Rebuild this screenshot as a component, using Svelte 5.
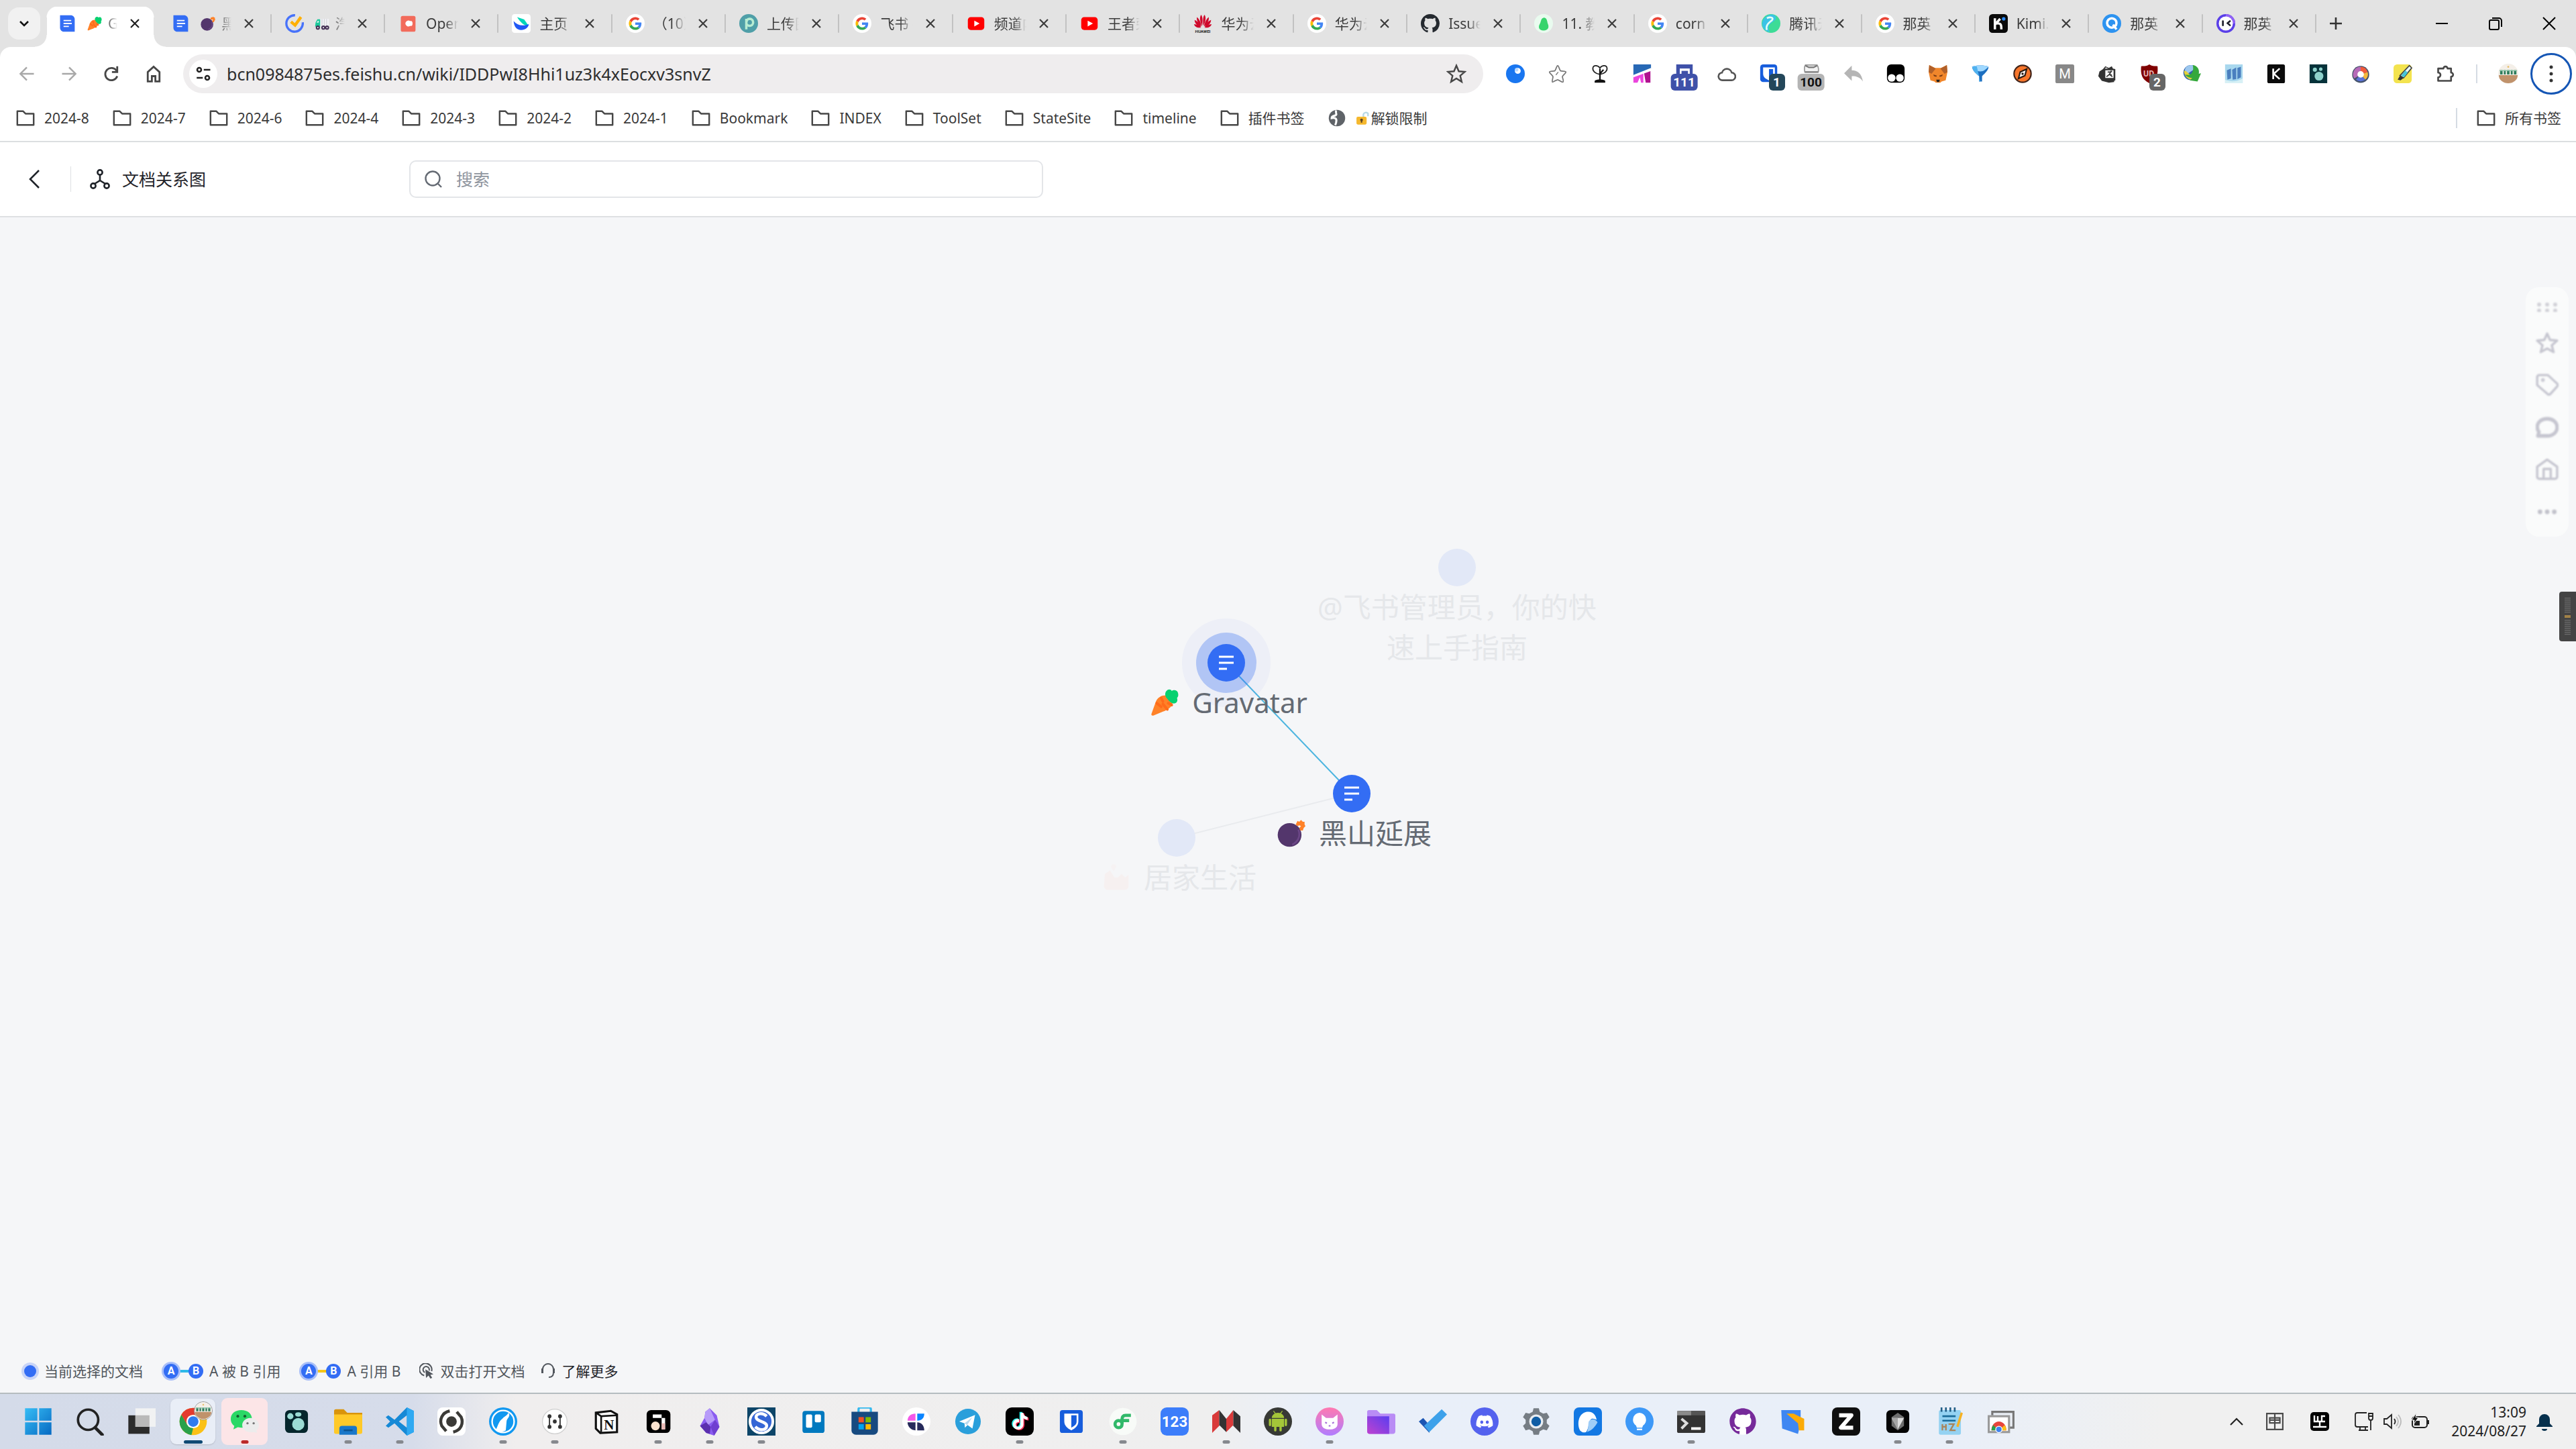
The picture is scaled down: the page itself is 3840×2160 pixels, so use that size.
<script>
  const googleG =
    '<circle cx="16" cy="16" r="16" fill="#fff"/><g transform="translate(5 5) scale(.458)"><path fill="#ea4335" d="M24 9.5c3.54 0 6.71 1.22 9.21 3.6l6.85-6.85C35.9 2.38 30.47 0 24 0 14.62 0 6.51 5.38 2.56 13.22l7.98 6.19C12.43 13.72 17.74 9.5 24 9.5z"/><path fill="#4285f4" d="M46.98 24.55c0-1.57-.15-3.09-.38-4.55H24v9.02h12.94c-.58 2.96-2.26 5.48-4.78 7.18l7.73 6c4.51-4.18 7.09-10.36 7.09-17.65z"/><path fill="#fbbc05" d="M10.53 28.59c-.48-1.45-.76-2.99-.76-4.59s.27-3.14.76-4.59l-7.98-6.19C.92 16.46 0 20.12 0 24c0 3.88.92 7.54 2.56 10.78l7.97-6.19z"/><path fill="#34a853" d="M24 48c6.48 0 11.93-2.13 15.89-5.81l-7.73-6c-2.15 1.45-4.92 2.3-8.16 2.3-6.26 0-11.57-4.22-13.47-9.91l-7.98 6.19C6.51 42.62 14.62 48 24 48z"/></g>';

  const octocat =
    'M8 0C3.58 0 0 3.58 0 8c0 3.54 2.29 6.53 5.47 7.59.4.07.55-.17.55-.38 0-.19-.01-.82-.01-1.49-2.01.37-2.53-.49-2.69-.94-.09-.23-.48-.94-.82-1.13-.28-.15-.68-.52-.01-.53.63-.01 1.08.58 1.23.82.72 1.21 1.87.87 2.33.66.07-.52.28-.87.51-1.07-1.78-.2-3.64-.89-3.64-3.95 0-.87.31-1.59.82-2.15-.08-.2-.36-1.02.08-2.12 0 0 .67-.21 2.2.82.64-.18 1.32-.27 2-.27.68 0 1.36.09 2 .27 1.53-1.04 2.2-.82 2.2-.82.44 1.1.16 1.92.08 2.12.51.56.82 1.27.82 2.15 0 3.07-1.87 3.75-3.65 3.95.29.25.54.73.54 1.48 0 1.07-.01 1.93-.01 2.2 0 .21.15.46.55.38A8.013 8.013 0 0016 8c0-4.42-3.58-8-8-8z';

  const tiktokNote =
    'M12.525.02c1.31-.02 2.61-.01 3.91-.02.08 1.53.63 3.09 1.75 4.17 1.12 1.11 2.7 1.62 4.24 1.79v4.03c-1.44-.05-2.89-.35-4.2-.97-.57-.26-1.1-.59-1.62-.93-.01 2.92.01 5.84-.02 8.75-.08 1.4-.54 2.79-1.35 3.94-1.31 1.92-3.58 3.17-5.91 3.21-1.43.08-2.86-.31-4.08-1.03-2.02-1.19-3.44-3.37-3.65-5.71-.02-.5-.03-1-.01-1.49.18-1.9 1.12-3.72 2.58-4.96 1.66-1.44 3.98-2.13 6.15-1.72.02 1.48-.04 2.96-.04 4.44-.99-.32-2.15-.23-3.02.37-.63.41-1.11 1.04-1.36 1.75-.21.51-.15 1.07-.14 1.61.24 1.64 1.82 3.02 3.5 2.87 1.12-.01 2.19-.66 2.77-1.61.19-.33.4-.67.41-1.06.1-1.79.06-3.57.07-5.36.01-4.03-.01-8.05.02-12.07z';

  const discordFace =
    'M20.317 4.37a19.79 19.79 0 00-4.885-1.515.074.074 0 00-.079.037c-.21.375-.444.865-.608 1.25-1.845-.277-3.68-.277-5.487 0-.163-.394-.405-.875-.617-1.25a.077.077 0 00-.079-.037 19.74 19.74 0 00-4.885 1.515.07.07 0 00-.032.028C.533 9.046-.319 13.58.099 18.058a.082.082 0 00.031.056c2.053 1.508 4.041 2.423 5.993 3.03a.078.078 0 00.084-.028c.462-.63.873-1.295 1.226-1.994a.076.076 0 00-.042-.106c-.652-.248-1.274-.55-1.872-.892a.077.077 0 01-.007-.128c.125-.094.251-.192.371-.291a.074.074 0 01.078-.01c3.928 1.793 8.18 1.793 12.061 0a.074.074 0 01.079.009c.12.099.246.198.373.292a.077.077 0 01-.007.128 12.3 12.3 0 01-1.873.891.077.077 0 00-.04.107c.36.698.771 1.363 1.225 1.993a.076.076 0 00.084.029c1.961-.607 3.95-1.522 6.002-3.03a.077.077 0 00.032-.055c.5-5.177-.838-9.674-3.549-13.66a.061.061 0 00-.031-.029zM8.02 15.331c-1.183 0-2.157-1.086-2.157-2.419s.956-2.419 2.157-2.419c1.21 0 2.176 1.095 2.157 2.419 0 1.333-.956 2.419-2.157 2.419zm7.975 0c-1.183 0-2.157-1.086-2.157-2.419s.955-2.419 2.157-2.419c1.21 0 2.176 1.095 2.157 2.419 0 1.333-.946 2.419-2.157 2.419z';

  const youtube =
    '<rect x="2" y="5" width="28" height="22" rx="5" fill="#f00"/><path d="M13 11l9 5-9 5z" fill="#fff"/>';

  const pot =
    '<circle cx="16" cy="16" r="16" fill="#f4efe8"/><path d="M1 18h30a15 13 0 01-30 0z" fill="#c0926b"/><path d="M3 10h4v7H3zM9 10h3v7H9zM14 10h4v7h-4zM20 10h3v7h-3zM25 10h4v7h-4z" fill="#2f7d5c"/><path d="M2 11h28" stroke="#8fc7ad" stroke-width="1.5"/><circle cx="16" cy="5" r="1.5" fill="#e8bf6a"/>';

  const art = {
    doc: '<path d="M4 2h18c4 0 7 3 7 7v21H11c-4 0-7-3-7-7z" fill="#336df4"/><path d="M10 11h13M10 16h14M10 21h9" stroke="#fff" stroke-width="2.200"/>',
    carrot:
      '<path d="M17 8c4 0 8 4 8 8.500-1 5-5 7.500-11 10L3 31c-1.500.5-2.500-.5-2-2l5-14C8 10.500 12 8 17 8z" fill="#ff8228"/><path d="M7 17l5 4M12 11l2 4M19 24l-5-6M24 19l-4-2" stroke="#ff6a1a" stroke-width="3" stroke-linecap="round"/><path d="M19 12c-3-3-3-7-1-9 2-2.500 5-2 6 0 2-1.500 6-1.500 7 2s0 5-1 6c1 3 0 5-2 6-3 1-6-1-9-5z" fill="#06d170"/>',
    berry:
      '<circle cx="14" cy="18" r="13.500" fill="#53366c"/><path d="M24 12c3 8-1 14-7 17" stroke="#6c4787" stroke-width="2" fill="none"/><path d="M21 6l2-4 2 1 2-2 2 2 2 0v3l1 2-2 2-1 3-3 0-1-3 2-2-2-1-2 1z" fill="#ff8228"/>',
    cottage:
      '<path d="M10 4a3 3 0 016 0l-3 5z" fill="#ffd9d2"/><path d="M3 12l6-4 5 8 4 0 4-4 4 4 4-3v13a4 4 0 01-4 4H6a4 4 0 01-4-4z" fill="#ffccbf"/>',
    check:
      '<path d="M30 14A14 14 0 1117 2" fill="none" stroke="#4772fa" stroke-width="3.800"/><path d="M10 13l7 6L27 5" fill="none" stroke="#ffb000" stroke-width="5"/>',
    truck:
      '<path d="M12 6h19v17H12z" fill="#f1f1f4"/><path d="M16 6v17M21 6v17M26 6v17" stroke="#cfcfd6" stroke-width="1.500"/><path d="M2 14l4-7h6v16H1z" fill="#1bc89a"/><path d="M4 14l3-4h2v4z" fill="#d6f5ec"/><g fill="#fff" stroke="#443055" stroke-width="3"><circle cx="7" cy="25" r="3"/><circle cx="19" cy="25" r="3"/><circle cx="27" cy="25" r="3"/></g>',
    coral:
      '<rect x="4" y="3" width="25" height="27" rx="3" fill="#f26b5b"/><path d="M20 12a5 5 0 100 8c2 1 4 0 4-4s-2-5-4-4z" fill="#fff"/>',
    cloud:
      '<rect width="32" height="32" rx="5" fill="#fff"/><path d="M9 5l12 4 7 10c-5 2-12-3-19-14z" fill="#00d6b9"/><path d="M3 12c7 8 16 9 26 5-1 6-6 10-13 10C8 27 4 22 3 12z" fill="#2158f5"/>',
    google: googleG,
    picture:
      '<circle cx="16" cy="16" r="16" fill="#4f9fa8"/><path d="M16 0a16 16 0 010 32 16 16 0 000-32z" fill="#4b86b8"/><path d="M12 26V8M12 16a6 6 0 106-8c-4 0-6 3-6 8" fill="none" stroke="#b7ecd2" stroke-width="4"/>',
    youtube,
    huawei:
      '<g fill="#cf0a2c"><path d="M15 20C11 12 10 6 13 1c3 3 3 11 2 19zM17 20c4-8 5-14 2-19-3 3-3 11-2 19zM14 21C7 15 5 10 6 5c4 3 7 10 8 16zM18 21c7-6 9-11 8-16-4 3-7 10-8 16zM13 22C5 19 2 15 2 10c5 2 9 7 11 12zM19 22c8-3 11-7 11-12-5 2-9 7-11 12zM13 23C6 24 2 21 1 17c5 0 9 3 12 6zM19 23c7 1 11-2 12-6-5 0-9 3-12 6z"/></g><text x="16" y="32" font-size="7" font-weight="700" text-anchor="middle" font-family="Roboto, sans-serif" fill="#222">HUAWEI</text>',
    github: `<path transform="scale(2)" fill="#24292f" d="${octocat}"/>`,
    pear: '<circle cx="16" cy="16" r="16" fill="#e9fbef"/><path d="M17 6c5 1 5 6 6 10 3 6 1 12-7 12S6 22 10 16c2-4 1-9 7-10z" fill="#37d46c"/>',
    tencent:
      '<circle cx="16" cy="16" r="16" fill="#3ddc97"/><path d="M20 1c7 3 5 9-1 12-6 4-10 9-5 18C3 29-3 17 4 8 9 2 14 0 20 1z" fill="#3cc3e6"/><path d="M9 7c6-3 12-1 9 3-4 4-12 8-9 17" fill="none" stroke="#e5fff5" stroke-width="3"/>',
    kimi: '<rect width="32" height="32" rx="6" fill="#0a0a0a"/><path d="M10 7v19M10 18l9-10M13 16c8-1 8 3 8 10" fill="none" stroke="#fff" stroke-width="4"/><circle cx="25" cy="8" r="3" fill="#2b8cff"/>',
    quark:
      '<circle cx="16" cy="16" r="16" fill="#2d93f0"/><circle cx="16" cy="15" r="8" fill="none" stroke="#fff" stroke-width="4"/><path d="M18 18l6 8" stroke="#fff" stroke-width="4"/>',
    mask: '<circle cx="16" cy="16" r="16" fill="#5a3fe8"/><path d="M16 0a16 16 0 0116 16H16z" fill="#8f62f5"/><circle cx="16" cy="16" r="12" fill="#fff"/><path d="M11 12v7M23 12l-4 3.500 4 3.500" fill="none" stroke="#1c1c2b" stroke-width="3" stroke-linecap="round"/>',

    folder:
      '<path d="M3 5h9l4 4h13v18H3z" fill="none" stroke="#474747" stroke-width="2.600" stroke-linejoin="round"/>',
    globe:
      '<circle cx="16" cy="16" r="14" fill="#5f6368"/><path d="M15 3c-3 4 2 5-1 8-3 2-7 1-7 5 4-1 8 0 8 4s0 4-2 8" fill="none" stroke="#fff" stroke-width="3.500"/>',
    padlock:
      '<path d="M18 15V8a6 6 0 0110-2v6" fill="none" stroke="#b9d9e6" stroke-width="3.500"/><rect x="3" y="13" width="22" height="17" rx="3" fill="#f5b82e"/><circle cx="14" cy="20" r="3" fill="#5b4326"/><path d="M14 20v6" stroke="#5b4326" stroke-width="3"/>',

    back: '<path d="M28 16H5M16 5L5 16l11 11" fill="none" stroke="#a8a8a8" stroke-width="2.800"/>',
    forward: '<path d="M4 16h23M16 5l11 11-11 11" fill="none" stroke="#a8a8a8" stroke-width="2.800"/>',
    reload:
      '<path d="M25 11A10.500 10.500 0 1026 20" fill="none" stroke="#474747" stroke-width="3.200"/><path d="M26 3v10H17" fill="none" stroke="#474747" stroke-width="3.200"/>',
    home: '<path d="M6 29V13l10-9 10 9v16h-7v-9h-6v9z" fill="none" stroke="#474747" stroke-width="3.200"/>',
    tune: '<g fill="none" stroke="#222" stroke-width="3.400"><circle cx="8" cy="8" r="4"/><path d="M17 8h13M3 24h12"/><circle cx="24" cy="24" r="4"/></g>',
    star: '<path d="M16 3l3.800 9 9.700.8-7.400 6.300 2.300 9.500L16 23.500l-8.400 5.100 2.300-9.500-7.400-6.300 9.700-.8z" fill="none" stroke="#474747" stroke-width="2.600"/>',

    moonball: '<circle cx="16" cy="16" r="16" fill="#1976f0"/><circle cx="20" cy="11" r="5" fill="#fff"/><circle cx="18" cy="9" r="3" fill="#b8d8ff"/>',
    starline: '<path d="M16 2c2 0 3 8 5 9s9 0 9 2-6 6-6 8 3 8 1 9-7-4-9-4-8 5-9 4 1-7 1-9-6-6-6-8 7-1 9-2 3-9 5-9z" fill="none" stroke="#777" stroke-width="2"/><path d="M13 18l4-5" stroke="#777" stroke-width="1.500"/>',
    tree: '<path d="M16 17C8 16 3 11 4 6s8-5 12 0c4-5 11-5 12 0s-4 10-12 11z" fill="none" stroke="#222" stroke-width="2"/><path d="M16 7v20M16 16l6-7" stroke="#111" stroke-width="2.600"/><path d="M7 28c3-3 15-3 18 0v3H7z" fill="#111"/>',
    ribbon: '<path d="M1 0h30v7L1 19z" fill="#2768b5"/><path d="M1 19L18 12v19H14L12 22 8 31H1z" fill="#eb45dd"/><path d="M19 14l11-6v23H22z" fill="#b0118f"/><path d="M1 18L31 6v5L1 22z" fill="#fff"/>',
    save: '<path d="M2 0h28v30H2z" fill="#3f51a9"/><path d="M8 7h17v13H8z" fill="#fff"/><path d="M11 11h11v9H11z" fill="#3f51a9"/>',
    cloudline: '<path d="M9 27a6.500 6.500 0 01-1-13 8.500 8.500 0 0116.500 0A6.500 6.500 0 0124 27z" fill="none" stroke="#555" stroke-width="3"/>',
    shieldblue: '<rect x="1" width="29" height="30" rx="5" fill="#175ddc"/><path d="M6 5h20v11c0 6-5 9-10 11C11 25 6 22 6 16z" fill="#fff"/><path d="M16 8h7v8c0 4-3 6-7 8z" fill="#175ddc"/>',
    helmet: '<path d="M6 1h20c2 3 3 7 2 12H5C4 8 4 4 6 1z" fill="#f3f3f3" stroke="#9a9a9a" stroke-width="2"/><path d="M6 2l6 3h8l6-3" fill="none" stroke="#777" stroke-width="2.500"/><path d="M5 13h23" stroke="#8a8a8a" stroke-width="3"/>',
    reply: '<path d="M13 2v8c10 0 17 6 19 19-5-7-10-9-19-9v8L0 15z" fill="#b5b5b5"/>',
    panda: '<rect x="1" y="0" width="30" height="31" rx="7" fill="#000"/><circle cx="9" cy="23" r="6.500" fill="#fff"/><circle cx="23" cy="23" r="6.500" fill="#fff"/>',
    fox: '<path d="M1 1l10 5h10l10-5 1 12-3 14-7 2-2 2h-8l-2-2-7-2L0 13z" fill="#f0862b"/><path d="M1 1l11 6-7 9-5-3zM31 1L20 7l7 9 5-3z" fill="#b0602a"/><path d="M8 17l6 2-1 2-4-1zM24 17l-6 2 1 2 4-1z" fill="#7a3b14"/><path d="M13 26h6l-1 4h-4z" fill="#222"/>',
    balloon: '<path d="M2 4c6-3 22-3 28 0 0 6-6 11-11 16v9h-5v-9C8 15 3 11 2 4z" fill="#1c6fc0"/><path d="M2 4c6-3 22-3 28 0-4 4-8 8-14 8C10 12 5 8 2 4z" fill="#9fd8ff"/><path d="M10 3l6 26h-2v-9C8 15 3 11 2 4z" fill="#4fb1ef"/>',
    compass: '<circle cx="16" cy="16" r="14.500" fill="#f7762b" stroke="#41241a" stroke-width="2.500"/><path d="M23 8l-3 11-11 5 3-11z" fill="#fff" stroke="#2a1a10" stroke-width="2.400"/><circle cx="16" cy="16" r="2" fill="#2a1a10"/>',
    gray: '<rect x="0" width="32" height="32" rx="3" fill="#888"/><text x="16" y="24" font-size="23" text-anchor="middle" font-family="Roboto, sans-serif" fill="#fff">M</text>',
    cards: '<path d="M3 12l6-4 4-5 6 3 5-3 2 4 4 1v19l-2 1v2l-9 1-12-3-6-8z" fill="#333"/><path d="M12 7l2-2 4 2z" fill="#fff"/><path d="M12 9h16v15H12z" fill="#fff" stroke="#333" stroke-width="2"/><path d="M15 21l5-4 5 4M17 13h5l-2 4 4 1" fill="none" stroke="#333" stroke-width="2"/><circle cx="23" cy="12" r="1.500" fill="#333"/>',
    ublock: '<path d="M16 0c4 3 8 3 14 3 1 14-1 22-14 29C3 25 1 17 2 3c6 0 10 0 14-3z" fill="#800000"/><text x="15" y="20" font-size="14" font-weight="700" text-anchor="middle" font-family="Roboto, sans-serif" fill="#e4b7b7">UD</text>',
    idm: '<circle cx="15" cy="14" r="13" fill="#2f62ab"/><path d="M7 4c5-4 12-4 16 1l-5 5-9 6C4 13 3 9 7 4z" fill="#9cc7ee"/><path d="M3 11c0 7 5 14 12 15 3 0 4-6 1-8C10 17 8 10 3 11z" fill="#e5cf3a"/><path d="M18 1c8 1 12 8 10 15l4-1-6 14-13-2 4-4C10 22 6 20 5 17c8 3 16-2 13-16z" fill="#35a83c"/>',
    notes: '<rect x="1" y="0" width="30" height="32" fill="#a9d8ee"/><path d="M4 10l7-3v17l-6 2zM13 9l7-4v20l-6 1zM22 6l6-2v18l-6 3z" fill="#4a7fbf"/><path d="M1 26c8 4 20 4 30-2v8H1z" fill="#d7f0f5"/>',
    kblack: '<rect x="1" width="30" height="32" rx="3" fill="#0b0b0b"/><path d="M11 7v18M22 7l-10 9 10 9" fill="none" stroke="#fff" stroke-width="3"/>',
    bubbles: '<rect x="1" width="30" height="32" fill="#06323a"/><circle cx="10" cy="9" r="3.500" fill="#8ed2cc"/><circle cx="20" cy="8" r="3" fill="#8ed2cc"/><circle cx="17" cy="20" r="7.500" fill="#8ed2cc"/>',
    pie: '<circle cx="16" cy="17" r="14.500" fill="#44536b"/><path d="M16 17V4a13 13 0 0112 9z" fill="#f15b3a"/><path d="M16 17l12-4a13 13 0 01-4 13z" fill="#f5b83c"/><path d="M16 17l8 9a13 13 0 01-16 0z" fill="#5a73d8"/><path d="M16 17L5 24A13 13 0 0116 4z" fill="#b66ab8"/><circle cx="16" cy="17" r="5.500" fill="#fff"/>',
    marker: '<rect width="31" height="32" rx="6" fill="#f3e34f"/><path d="M27 2l4 4L17 23l-6-4z" fill="#eafafa" stroke="#444" stroke-width="2"/><path d="M11 19l6 4-5 4-5-1z" fill="#333"/><path d="M20 10l4 4-6 8-5-3z" fill="#45c5d8"/>',
    puzzle: '<path d="M4 7h9a3.500 3.500 0 017 0h6v7a3.500 3.500 0 010 7v7H4v-6a4 4 0 000-8z" fill="none" stroke="#474747" stroke-width="3" stroke-linejoin="round"/>',
    pot,

    start: '<path d="M1 1h14v14H1zM17 1h14v14H17zM1 17h14v14H1zM17 17h14v14H17z" fill="url(#winBlue)"/>',
    search: '<circle cx="14" cy="14" r="11.500" fill="none" stroke="#222" stroke-width="2.800"/><path d="M22 23l8 8" stroke="#222" stroke-width="3.600" stroke-linecap="round"/>',
    views: '<path d="M1 9h24v21H1z" fill="#2b2b2b"/><path d="M9 1h23v21H9z" fill="#f4f4f4" opacity=".9"/><path d="M9 9h16v13H9z" fill="#b9b9b9"/>',
    chrome:
      '<circle cx="16" cy="16" r="15.500" fill="#fbc116"/><path d="M2.500 8.300A15.500 15.500 0 0129.400 8.300H16l-6.700 11.500z" fill="#e33b2e"/><path d="M2.500 8.300l6.800 11.600L16 23.500 14 31.400A15.500 15.500 0 012.500 8.300z" fill="#2aa14a"/><circle cx="16" cy="16" r="7.700" fill="#fff"/><circle cx="16" cy="16" r="6" fill="#2f7bee"/>',
    wechat:
      '<path d="M12 3c7 0 12 4 12 10s-5 10-12 10l-4-.6L3 25l1-4C1 19 0 16 0 13 0 7 5 3 12 3z" fill="#2bd866"/><path d="M22 12c6 0 10 4 10 8 0 3-1 5-3 6l1 3-4-1c-7 1-13-2-13-8 0-4 4-8 9-8z" fill="#ececec"/><circle cx="8" cy="10" r="1.600" fill="#145f31"/><circle cx="16" cy="10" r="1.600" fill="#145f31"/><circle cx="19" cy="18" r="1.300" fill="#777"/><circle cx="26" cy="18" r="1.300" fill="#777"/>',
    bubbleApp:
      '<rect x="3" y="3" width="26" height="26" rx="5" fill="#05262c"/><ellipse cx="9" cy="10" rx="3.500" ry="3.500" fill="#9bdcd4"/><ellipse cx="18" cy="8" rx="3.500" ry="2.400" fill="#9bdcd4"/><circle cx="18" cy="19" r="7" fill="#9bdcd4"/>',
    explorer:
      '<path d="M0 4a2 2 0 012-2h9l4 4h17v8H0z" fill="#d9940c"/><path d="M0 8h32v20a2 2 0 01-2 2H2a2 2 0 01-2-2z" fill="#ffc928"/><path d="M6 24a3 3 0 013-3h14a3 3 0 013 3v7H6z" fill="#1977c9"/><path d="M11 26h10" stroke="#0c5390" stroke-width="2"/>',
    vscode:
      '<path d="M24 0l8 4v24l-8 4L10 18l-7 5-3-2 5-5-5-5 3-2 7 5zM24 9l-9 7 9 7z" fill="#1689d6"/><path d="M24 0l8 4v24l-8 4z" fill="#2fa9f2"/>',
    swirl:
      '<rect width="32" height="32" rx="6" fill="#fff"/><circle cx="16" cy="16" r="6" fill="#3b3a37"/><path d="M14 4C5 6 2 14 5 21l5 6M18 28c9-2 12-10 9-17l-5-6" fill="none" stroke="#3b3a37" stroke-width="3.400"/>',
    lark:
      '<circle cx="16" cy="16" r="16" fill="#1198f0"/><circle cx="16" cy="16" r="12.500" fill="none" stroke="#fff" stroke-width="1.800"/><path d="M22 6c3 3-1 6-2 9l-1 11c-5 3-9 1-11-1 3-6 3-9 7-12 2-3 5-3 7-7z" fill="#fff"/>',
    hnode:
      '<circle cx="16" cy="16" r="14" fill="#fff" stroke="#cfcfcf"/><path d="M10 11v10M22 11v10" stroke="#333" stroke-width="1.400"/><g fill="#333"><circle cx="10" cy="10" r="2.200"/><circle cx="22" cy="10" r="2.200"/><circle cx="10" cy="22" r="2.200"/><circle cx="22" cy="22" r="2.200"/><circle cx="16" cy="16" r="2.200"/></g>',
    notion:
      '<path d="M4 6l17-2 7 4v20l-19 1-5-5z" fill="#fff" stroke="#111" stroke-width="2.400"/><path d="M4 6l6 4 18-1" fill="none" stroke="#111" stroke-width="2"/><path d="M10 10v18" stroke="#111" stroke-width="2"/><text x="19" y="25" font-size="16" font-weight="700" text-anchor="middle" font-family="Liberation Serif, serif" fill="#111">N</text>',
    ai: '<rect x="3" y="3" width="27" height="26" rx="5" fill="#000"/><circle cx="13" cy="21" r="5" fill="#fbe3cf"/><path d="M10 8h10v4H10zM20 12h4v13h-4z" fill="#fff"/><path d="M20 18h4v7h-4z" fill="#e9b9b5"/>',
    obsidian:
      '<path d="M16 1l8 8 3 13-6 10-9-3-7-8 5-9 1-7z" fill="#8a5cf0"/><path d="M16 1l-5 4-1 7 4 8 8-6z" fill="#b79bf9"/><path d="M5 21l7-4 5 5-1 8-4-1z" fill="#5b2fae"/><path d="M22 14l5 8-6 10-4-10z" fill="#6f3fd0"/>',
    sgrid:
      '<rect width="32" height="32" fill="#0d4568"/><circle cx="16" cy="16" r="13" fill="#3566d6" stroke="#fff" stroke-width="3"/><path d="M22 10c-5-5-12-3-12 1 0 5 12 5 12 10 0 5-8 6-13 1" fill="none" stroke="#fff" stroke-width="3.400"/>',
    trello:
      '<rect x="4" y="4" width="25" height="25" rx="3" fill="#0079bf"/><rect x="8" y="8" width="7" height="15" rx="1.500" fill="#fff"/><rect x="18" y="8" width="7" height="9" rx="1.500" fill="#fff"/>',
    store:
      '<path d="M9 6V2a2 2 0 012-2h10a2 2 0 012 2v4" fill="none" stroke="#35b9ee" stroke-width="2.500"/><path d="M1 5h30v21a5 5 0 01-5 5H6a5 5 0 01-5-5z" fill="#174a80"/><path d="M9 11h6v6H9z" fill="#f25022"/><path d="M17 11h6v6h-6z" fill="#7fba00"/><path d="M9 19h6v6H9z" fill="#00a4ef"/><path d="M17 19h6v6h-6z" fill="#ffb900"/>',
    craft:
      '<circle cx="16" cy="16" r="16" fill="#fff"/><path d="M15 7v8H6c0-5 4-8 9-8z" fill="#f358e8"/><path d="M17 7h8c0 5-3 8-8 8z" fill="#0a84ff"/><path d="M6 17h9v9c-5 0-9-4-9-9zM17 17c5 0 8 4 8 9h-8z" fill="#262a5b"/>',
    telegram:
      '<circle cx="16" cy="16" r="14.500" fill="#2a9fdb"/><path d="M6 16L24 8.500 21 24l-5.500-4-3 3-.5-5z" fill="#fff"/><path d="M12 18l9-7-6 9" fill="#b9d9ee"/>',
    tiktok: `<rect width="32" height="32" rx="7" fill="#000"/><g transform="translate(7 6) scale(.8)"><path transform="translate(-1.500 -1)" fill="#25f4ee" d="${tiktokNote}"/><path transform="translate(1.500 1)" fill="#fe2c55" d="${tiktokNote}"/><path fill="#fff" d="${tiktokNote}"/></g>`,
    bitwarden:
      '<rect x="3" y="3" width="26" height="26" rx="3" fill="#175ddc"/><path d="M8 7h16v9c0 5-4 8-8 10-4-2-8-5-8-10z" fill="#fff"/><path d="M16 9h6v7c0 4-3 5-6 7z" fill="#175ddc"/>',
    leaf: '<circle cx="16" cy="16" r="15.500" fill="#f8fbf8"/><path d="M15 19a4 4 0 10-4 4c3 0 4-2 4-5v-5c0-2 1-4 4-4h6M13 15h10" fill="none" stroke="#31b96a" stroke-width="3.600"/>',
    n123: '<rect width="32" height="32" rx="7" fill="#3c7dfa"/><text x="16" y="22" font-size="17" font-weight="700" text-anchor="middle" font-family="Roboto, sans-serif" fill="#fff">123</text>',
    mfold:
      '<path d="M0 9l8-6v18l-8 8z" fill="#d93a3a"/><path d="M8 3l8 10v15L8 20z" fill="#333"/><path d="M16 13l8-10v17l-8 8z" fill="#d93a3a"/><path d="M24 3l8 7v19l-8-8z" fill="#333"/>',
    android:
      '<circle cx="16" cy="16" r="16" fill="#373935"/><path d="M9 12a7 6 0 0114 0zM9 13h14v9H9z" fill="#a4c639"/><path d="M7 14v6M25 14v6M13 22v4M19 22v4" stroke="#a4c639" stroke-width="2.600" stroke-linecap="round"/><path d="M11 4l2 3M21 4l-2 3" stroke="#a4c639"/>',
    cat: '<circle cx="16" cy="16" r="16" fill="url(#catGrad)"/><path d="M7 8l5 4h8l5-4v11c0 4-4 6-9 6s-9-2-9-6z" fill="#fff"/><path d="M11 17l2 1M21 17l-2 1M15 21h2" stroke="#a46bd8" stroke-width="1.600"/>',
    purpleFolder:
      '<path d="M0 5a2 2 0 012-2h9l4 4h15a2 2 0 012 2v18a3 3 0 01-3 3H3a3 3 0 01-3-3z" fill="#b98cf5"/><path d="M0 10h25v20H3a3 3 0 01-3-3z" fill="url(#folderGrad)"/>',
    todo: '<path d="M0 16l5-4 7 8-0 9z" fill="#1b56b3"/><path d="M12 28L6 21 26 2l6 6z" fill="#3da1ea"/>',
    discord: `<circle cx="16" cy="16" r="16" fill="#5462ee"/><g transform="translate(6.500 6.500) scale(.79)"><path fill="#fff" d="${discordFace}"/></g>`,
    gear: '<path d="M13 1h6l1 4 4 2 4-1 3 5-3 3v4l3 3-3 5-4-1-4 2-1 4h-6l-1-4-4-2-4 1-3-5 3-3v-4l-3-3 3-5 4 1 4-2z" fill="#767d84"/><circle cx="16" cy="16" r="8" fill="#e9edf2"/><circle cx="16" cy="16" r="5.500" fill="#0f5da5"/>',
    birdApp:
      '<rect width="32" height="32" rx="6" fill="#1378e3"/><path d="M7 26C3 18 6 6 15 5c7-1 10 4 11 9-3-1-5-2-7 0-3 3-1 8-5 14-3 1-5 0-7-2z" fill="#fff"/><path d="M17 16c3-4 8-3 10 1-3 5-6 9-12 11 2-4 1-8 2-12z" fill="#9fcdf7"/>',
    bulb: '<circle cx="16" cy="16" r="16" fill="#3d98f7"/><path d="M16 6a8 8 0 014 14.500l-1 2.500h-6l-1-2.500A8 8 0 0116 6z" fill="#fff"/><path d="M13 25h6" stroke="#fff" stroke-width="1.800"/>',
    terminal:
      '<rect y="4" width="32" height="25" rx="2" fill="#333"/><path d="M0 4h16v5H0z" fill="#8a8a8a"/><path d="M16 4h16v5H16z" fill="#555"/><path d="M5 13l6 5-6 6" fill="none" stroke="#ddd" stroke-width="3"/><path d="M16 24h11" stroke="#fff" stroke-width="3"/>',
    githubApp: `<circle cx="16" cy="16" r="15" fill="#fff"/><path transform="translate(1 1) scale(1.875)" fill="#762a9a" d="${octocat}"/>`,
    board:
      '<path d="M1 3h22v14l-3 13L2 24z" fill="#3f87f2"/><path d="M7 7h8l12 6v13h-6l-1-8z" fill="#fbab08"/>',
    zed: '<rect width="32" height="32" rx="6" fill="#0f0f0f"/><path d="M8 9h14L10 23h14" fill="none" stroke="#fff" stroke-width="4.500" stroke-linejoin="round"/>',
    cursor:
      '<rect x="3" y="3" width="26" height="26" rx="5" fill="#050505"/><path d="M16 6l7 5v10l-7 5-7-5V11z" fill="#6e6e6e"/><path d="M9 12h14l-7 13z" fill="#dcdcdc"/><path d="M9 12h7v13z" fill="#a5a5a5"/>',
    notepad:
      '<rect x="4" y="3" width="25" height="28" rx="2" fill="#94d2f2"/><path d="M7 0v5M12 0v5M17 0v5M22 0v5" stroke="#235f87" stroke-width="2"/><path d="M8 10h15M8 15h15" stroke="#1a6c99" stroke-width="2"/><path d="M8 19v7M12 19v7M8 22h4M15 19h6l-4 7h6" fill="none" stroke="#a9855b" stroke-width="1.800"/><path d="M30 6l-5 16" stroke="#f6b224" stroke-width="2.600"/>',
    remote:
      '<path d="M6 9V5h24v18h-5" fill="none" stroke="#777" stroke-width="2.400"/><rect x="2" y="10" width="23" height="18" fill="#fff" stroke="#999" stroke-width="2.400"/><path d="M5 26a8.500 10 0 0117 0z" fill="#e8453c"/><path d="M5 26a9 10 0 012-6l6 6z" fill="#2aa14a"/><path d="M22 26a9 10 0 00-2-6l-6 6z" fill="#fbc116"/><circle cx="13.500" cy="25" r="3.600" fill="#3f83f0" stroke="#fff"/>',
  };

  const tabs = [
    { icon: 'doc', emoji: 'carrot', title: 'Gravatar', active: true },
    { icon: 'doc', emoji: 'berry', title: '黑山延展' },
    { icon: 'check', emoji: 'truck', title: '汽车' },
    { icon: 'coral', title: 'Open' },
    { icon: 'cloud', title: '主页' },
    { icon: 'google', title: '（10）' },
    { icon: 'picture', title: '上传图' },
    { icon: 'google', title: '飞书 -' },
    { icon: 'youtube', title: '频道内' },
    { icon: 'youtube', title: '王者荣' },
    { icon: 'huawei', title: '华为云' },
    { icon: 'google', title: '华为云' },
    { icon: 'github', title: 'Issues' },
    { icon: 'pear', title: '11. 教程' },
    { icon: 'google', title: 'corn' },
    { icon: 'tencent', title: '腾讯元' },
    { icon: 'google', title: '那英' },
    { icon: 'kimi', title: 'Kimi.' },
    { icon: 'quark', title: '那英' },
    { icon: 'mask', title: '那英' },
  ];

  const extensions = [
    { icon: 'moonball' },
    { icon: 'starline' },
    { icon: 'tree' },
    { icon: 'ribbon' },
    { icon: 'save', badge: '111', tone: 'indigo' },
    { icon: 'cloudline' },
    { icon: 'shieldblue', badge: '1', tone: 'teal' },
    { icon: 'helmet', badge: '100', tone: 'silver' },
    { icon: 'reply' },
    { icon: 'panda' },
    { icon: 'fox' },
    { icon: 'balloon' },
    { icon: 'compass' },
    { icon: 'gray' },
    { icon: 'cards' },
    { icon: 'ublock', badge: '2', tone: 'slate' },
    { icon: 'idm' },
    { icon: 'notes' },
    { icon: 'kblack' },
    { icon: 'bubbles' },
    { icon: 'pie' },
    { icon: 'marker' },
    { icon: 'puzzle' },
  ];

  const bookmarks = [
    '2024-8', '2024-7', '2024-6', '2024-4', '2024-3', '2024-2', '2024-1',
    'Bookmark', 'INDEX', 'ToolSet', 'StateSite', 'timeline', '插件书签',
  ];

  const nodes = [
    { x: 388, y: 168, text: 'Gravatar', emoji: 'carrot', selected: true },
    { x: 575, y: 363, text: '黑山延展', emoji: 'berry' },
    { x: 314, y: 429, text: '居家生活', emoji: 'cottage', faded: true },
    { x: 732, y: 26, text: '@飞书管理员，你的快速上手指南', faded: true },
  ];

  const apps = [
    ['start'], ['search'], ['views'], ['chrome', 'current'], ['wechat', 'alert'], ['bubbleApp'],
    ['explorer', 'open'], ['vscode', 'open'], ['swirl'], ['lark', 'open'], ['hnode', 'open'],
    ['notion'], ['ai', 'open'], ['obsidian', 'open'], ['sgrid', 'open'], ['trello'], ['store'],
    ['craft'], ['telegram'], ['tiktok', 'open'], ['bitwarden'], ['leaf', 'open'], ['n123'],
    ['mfold', 'open'], ['android'], ['cat', 'open'], ['purpleFolder'], ['todo'], ['discord'],
    ['gear'], ['birdApp'], ['bulb'], ['terminal', 'open'], ['githubApp'], ['board'], ['zed'],
    ['cursor', 'open'], ['notepad', 'open'], ['remote'],
  ];
</script>

{#snippet pic(name, cls)}
  <svg class={cls} viewBox="0 0 32 32" aria-hidden="true">{@html art[name]}</svg>
{/snippet}

{#snippet docGlyph()}
  <svg class="lines" viewBox="0 0 22 24" aria-hidden="true">
    <path d="M0 3h22M0 12h22M0 21h12" stroke="#fff" stroke-width="3" />
  </svg>
{/snippet}

<svg class="defs" aria-hidden="true">
  <defs>
    <linearGradient id="winBlue" x1="0" y1="0" x2="1" y2="1">
      <stop offset="0" stop-color="#36bdf5" />
      <stop offset="1" stop-color="#0669c2" />
    </linearGradient>
    <linearGradient id="catGrad" x1="0" y1="0" x2="0" y2="1">
      <stop offset="0" stop-color="#ff79b0" />
      <stop offset="1" stop-color="#b07dff" />
    </linearGradient>
    <linearGradient id="folderGrad" x1="1" y1="0" x2="0" y2="1">
      <stop offset="0" stop-color="#5a3df0" />
      <stop offset="1" stop-color="#c043cf" />
    </linearGradient>
  </defs>
</svg>

<div class="screen">
  <header class="browser">
    <div class="tabstrip">
      <button class="tabmenu" aria-label="搜索标签页">
        <svg viewBox="0 0 16 16"><path d="M2 5l6 6 6-6" fill="none" stroke="#111" stroke-width="2.600" /></svg>
      </button>
      <nav class="tabs">
        {#each tabs as tab}
          <div class="tab" class:active={tab.active}>
            <button class="tabbody">
              {@render pic(tab.icon, 'favicon')}
              <span class="tabtitle">
                {#if tab.emoji}{@render pic(tab.emoji, 'tabemoji')}{/if}{tab.title}
              </span>
            </button>
            <button class="tabclose" aria-label="关闭">
              <svg viewBox="0 0 16 16"><path d="M2 2l12 12M14 2L2 14" stroke="currentColor" stroke-width="2.200" /></svg>
            </button>
          </div>
        {/each}
      </nav>
      <button class="newtab" aria-label="新标签页">
        <svg viewBox="0 0 18 18"><path d="M9 0v18M0 9h18" stroke="#333" stroke-width="2.600" /></svg>
      </button>
      <div class="window">
        <button aria-label="最小化"><svg viewBox="0 0 20 20"><path d="M1 10h18" stroke="#000" stroke-width="2" /></svg></button>
        <button aria-label="还原">
          <svg viewBox="0 0 20 20"><rect x="1" y="5" width="14" height="14" rx="2" fill="none" stroke="#000" stroke-width="2" /><path d="M5 2h10a4 4 0 014 4v9" fill="none" stroke="#000" stroke-width="2" /></svg>
        </button>
        <button aria-label="关闭窗口"><svg viewBox="0 0 20 20"><path d="M1 1l18 18M19 1L1 19" stroke="#000" stroke-width="2" /></svg></button>
      </div>
    </div>

    <div class="toolbar">
      <div class="navs">
        <button aria-label="后退">{@render pic('back', 'i28')}</button>
        <button aria-label="前进">{@render pic('forward', 'i28')}</button>
        <button aria-label="刷新">{@render pic('reload', 'i28')}</button>
        <button aria-label="主页">{@render pic('home', 'i28')}</button>
      </div>
      <div class="omnibox">
        <button class="siteinfo" aria-label="网站信息">{@render pic('tune', 'i24')}</button>
        <input class="url" aria-label="地址" value="bcn0984875es.feishu.cn/wiki/IDDPwI8Hhi1uz3k4xEocxv3snvZ" />
        <button aria-label="收藏">{@render pic('star', 'i30')}</button>
      </div>
      <div class="extensions">
        {#each extensions as ext}
          <button class="ext" aria-label={ext.icon}>
            {@render pic(ext.icon, 'i28')}
            {#if ext.badge}<span class="badge {ext.tone}">{ext.badge}</span>{/if}
          </button>
        {/each}
      </div>
      <span class="rule"></span>
      <button class="profile" aria-label="个人资料">{@render pic('pot', 'i30')}</button>
      <button class="more" aria-label="更多">
        <svg viewBox="0 0 6 26"><circle cx="3" cy="3" r="2.500" /><circle cx="3" cy="13" r="2.500" /><circle cx="3" cy="23" r="2.500" /></svg>
      </button>
    </div>

    <nav class="bookmarks">
      {#each bookmarks as name}
        <a href="#top">{@render pic('folder', 'i30')}<span>{name}</span></a>
      {/each}
      <a href="#top">
        {@render pic('globe', 'i28')}
        <span class="unlock">{@render pic('padlock', 'i22')}解锁限制</span>
      </a>
      <span class="push"></span>
      <a class="all" href="#top">{@render pic('folder', 'i30')}<span>所有书签</span></a>
    </nav>
  </header>

  <div class="pagehead">
    <button class="goback" aria-label="返回">
      <svg viewBox="0 0 18 30"><path d="M16 2L3 15l13 13" fill="none" stroke="#1f2329" stroke-width="2.600" /></svg>
    </button>
    <div class="heading">
      <svg viewBox="0 0 30 30" aria-hidden="true">
        <g fill="none" stroke="#1f2329" stroke-width="2.600">
          <circle cx="15" cy="5" r="3.600" /><circle cx="5" cy="25" r="3.600" /><circle cx="25" cy="25" r="3.600" />
          <path d="M15 9v8l-8 5M15 17l8 5" />
        </g>
      </svg>
      <h1>文档关系图</h1>
    </div>
    <label class="find">
      <svg viewBox="0 0 28 28" aria-hidden="true"><circle cx="13" cy="13" r="10.500" fill="none" stroke="#646a73" stroke-width="2.400" /><path d="M21 21l5 5" stroke="#646a73" stroke-width="2.400" /></svg>
      <input type="search" placeholder="搜索" aria-label="搜索" />
    </label>
  </div>

  <main class="canvas">
    <div class="stage">
      <svg class="edges" viewBox="0 0 960 760" aria-hidden="true">
        <path d="M314 429L575 363" stroke="#e9ebee" stroke-width="2" />
        <path d="M388 168L575 363" stroke="#4cb5e0" stroke-width="2" />
      </svg>
      {#each nodes as node}
        <div class="node" class:faded={node.faded} class:selected={node.selected} style="left: {node.x}px; top: {node.y}px">
          <span class="dot">{#if !node.faded}{@render docGlyph()}{/if}</span>
          <span class="label" class:plain={!node.emoji}>
            {#if node.emoji}{@render pic(node.emoji, 'emoji')}{/if}
            <span>{node.text}</span>
          </span>
        </div>
      {/each}
    </div>

    <div class="legend">
      <span class="key"><i class="current"></i>当前选择的文档</span>
      <span class="key"><span class="pair cyan"><b class="ring">A</b><b>B</b></span>A 被 B 引用</span>
      <span class="key"><span class="pair amber"><b class="ring">A</b><b>B</b></span>A 引用 B</span>
      <span class="key tight">
        <svg viewBox="0 0 24 26" aria-hidden="true"><path d="M8 20A10 10 0 1120 13M9 15a5 5 0 117-3" fill="none" stroke="#51565d" stroke-width="2.200" /><path d="M10 10l13 8-5 1 3 5-3 1-3-5-4 4z" fill="#51565d" /></svg>
        双击打开文档
      </span>
      <a class="key tight help" href="#top">
        <svg viewBox="0 0 22 24" aria-hidden="true"><path d="M3 14V9a8 8 0 0116 0v5c0 5-3 7-7 7" fill="none" stroke="#51565d" stroke-width="2" /><path d="M1 8h3v7H1zM18 8h3v7h-3z" fill="#51565d" /></svg>
        了解更多
      </a>
    </div>

    <div class="floatbar">
      <svg class="grip" viewBox="0 0 32 14"><g fill="#d2d2d8"><circle cx="4" cy="3" r="3" /><circle cx="16" cy="3" r="3" /><circle cx="28" cy="3" r="3" /><circle cx="4" cy="12" r="3" /><circle cx="16" cy="12" r="3" /><circle cx="28" cy="12" r="3" /></g></svg>
      <button aria-label="收藏"><svg viewBox="0 0 32 32"><path d="M16 3l4 9 10 1-7.500 6.500L25 29l-9-5-9 5 2.500-9.500L2 13l10-1z" /></svg></button>
      <button aria-label="标签"><svg viewBox="0 0 32 32"><path d="M2 5a3 3 0 013-3h12l13 12a3 3 0 010 4l-9 10a3 3 0 01-5 0L2 16z" /><circle cx="10" cy="9" r="1" /></svg></button>
      <button aria-label="评论"><svg class="bold" viewBox="0 0 32 32"><path d="M16 4c8 0 14 5 14 12s-6 12-14 12H3l1.500-5.500A12 12 0 012 16C2 9 8 4 16 4z" /></svg></button>
      <button aria-label="主页"><svg viewBox="0 0 32 32"><path d="M2 12L16 2l14 10v14a3 3 0 01-3 3H5a3 3 0 01-3-3zM11 29V15h10v14" /></svg></button>
      <button aria-label="更多工具"><svg class="dots" viewBox="0 0 32 32"><circle cx="6" cy="16" r="3.200" /><circle cx="16" cy="16" r="3.200" /><circle cx="26" cy="16" r="3.200" /></svg></button>
    </div>
    <div class="minimap"><i></i><i class="lit"></i><i></i></div>
  </main>

  <footer class="taskbar">
    <nav class="apps">
      {#each apps as [name, state]}
        <button class="app {state ?? ''}" aria-label={name}>
          {@render pic(name, 'appicon')}
          {#if state === 'current'}{@render pic('pot', 'overlay')}{/if}
          {#if state}<i class="run"></i>{/if}
        </button>
      {/each}
    </nav>
    <div class="tray">
      <button aria-label="显示隐藏的图标"><svg class="t20" viewBox="0 0 20 20"><path d="M1 15l9-9 9 9" fill="none" stroke="#222" stroke-width="2.200" /></svg></button>
      <button aria-label="输入法"><svg class="t24" viewBox="0 0 24 24"><path d="M1 1h22v22H1zM5 7h14v7H5zM12 2v20M12 10H5M12 10h7" fill="none" stroke="#4b4b4b" stroke-width="2" /></svg></button>
      <button class="wide" aria-label="输入模式"><svg class="t28" viewBox="0 0 28 28"><rect width="28" height="28" rx="5" fill="#000" /><path d="M6 5v9h5V6M11 14h5M22 6h-5v8h5M14 14v8M4 22h20" fill="none" stroke="#fff" stroke-width="2.400" /></svg></button>
      <div class="status">
        <svg class="t28" viewBox="0 0 28 28"><path d="M18 1H4a3 3 0 00-3 3v15a3 3 0 003 3h16M8 22v5M16 22v5M6 27h14M21 2h6v7a3 3 0 01-6 0zM21 6h6M24 12v15" fill="none" stroke="#222" stroke-width="1.800" /></svg>
        <svg class="t28" viewBox="0 0 28 28"><path d="M2 10h4l7-6v20l-7-6H2z" fill="none" stroke="#222" stroke-width="1.800" /><path d="M17 10q3 4 0 8" fill="none" stroke="#222" stroke-width="1.800" /><path d="M20 7q6 7 0 14M23 4q8 10 0 20" fill="none" stroke="#bbb" stroke-width="1.800" /></svg>
        <svg class="t28" viewBox="0 0 28 28"><rect x="2" y="7" width="22" height="16" rx="4" fill="none" stroke="#222" stroke-width="2" /><path d="M5 13h8v7H5z" fill="#222" /><path d="M8 1L1 12h4l-1 6 7-10H7z" fill="#111" stroke="#f0f0f0" /><path d="M25 12h2v6h-2z" fill="#222" /></svg>
      </div>
      <button class="clock"><span>13:09</span><span>2024/08/27</span></button>
      <button aria-label="通知"><svg class="t24" viewBox="0 0 24 28"><path d="M4 11a8 8 0 0116 0v6l4 4v1H0v-1l4-4zM8 25h8a4 3 0 01-8 0z" fill="#06304d" /></svg></button>
    </div>
  </footer>
</div>

<style>
  :global(body) {
    background: #f5f6f8;
  }
  * {
    box-sizing: border-box;
  }
  .screen {
    display: flex;
    flex-direction: column;
    min-height: 100vh;
    font-family: 'Noto Sans', 'Noto Sans CJK SC', sans-serif;
    font-size: 21px;
    line-height: 28px;
    color: #1f1f1f;
    overflow: hidden;
  }
  button {
    display: flex;
    align-items: center;
    justify-content: center;
    padding: 0;
    border: 0;
    background: none;
    font: inherit;
    color: inherit;
  }
  a {
    color: inherit;
    text-decoration: none;
  }
  input {
    min-width: 0;
    padding: 0;
    border: 0;
    outline: 0;
    background: none;
    font: inherit;
  }
  svg {
    display: block;
    flex: none;
  }
  .defs {
    position: absolute;
    width: 0;
    height: 0;
  }
  .i22 { width: 22px; height: 22px; }
  .i24 { width: 24px; height: 24px; }
  .i28 { width: 28px; height: 28px; }
  .i30 { width: 30px; height: 30px; }

  /* browser chrome */
  .browser {
    background: #e3e3e3;
  }
  .tabstrip {
    display: flex;
    align-items: center;
    height: 70px;
    padding-left: 12px;
  }
  .tabmenu {
    flex: none;
    width: 48px;
    height: 48px;
    border-radius: 16px;
    background: #f1f1f1;
    margin-right: 6px;
  }
  .tabmenu svg { width: 16px; height: 16px; }
  .tabs {
    display: flex;
    flex: 1 1 0;
    min-width: 0;
    align-self: stretch;
  }
  .tab {
    position: relative;
    display: flex;
    flex: 1 1 0;
    min-width: 0;
    align-items: center;
    padding: 0 24px 0 20px;
    color: #3c3c3c;
  }
  .tab::after {
    content: '';
    position: absolute;
    right: 0;
    top: 21px;
    width: 2px;
    height: 28px;
    border-radius: 1px;
    background: #c2c2c2;
  }
  .tab.active::after {
    content: none;
  }
  .tab.active {
    color: #1f1f1f;
    z-index: 0;
  }
  .tab.active::before {
    content: '';
    position: absolute;
    z-index: -1;
    inset: 10px -12px 0 -14px;
    background:
      radial-gradient(circle at 0 0, transparent 17px, #fff 18px) left bottom / 18px 18px no-repeat,
      radial-gradient(circle at 100% 0, transparent 17px, #fff 18px) right bottom / 18px 18px no-repeat,
      linear-gradient(#fff, #fff) center bottom / calc(100% - 36px) calc(100% - 16px) no-repeat,
      linear-gradient(#fff, #fff) center top / calc(100% - 68px) 16px no-repeat,
      radial-gradient(circle at 34px 16px, #fff 16px, transparent 17px) left top / 34px 16px no-repeat,
      radial-gradient(circle at 0 16px, #fff 16px, transparent 17px) right top / 34px 16px no-repeat;
  }
  .tabbody {
    flex: 1;
    min-width: 0;
    justify-content: flex-start;
    gap: 13px;
  }
  .favicon {
    width: 28px;
    height: 28px;
  }
  .tabtitle {
    display: flex;
    flex: 1;
    align-items: center;
    min-width: 0;
    overflow: hidden;
    white-space: nowrap;
    margin-right: 16px;
    -webkit-mask-image: linear-gradient(90deg, #000 60%, transparent);
    mask-image: linear-gradient(90deg, #000 60%, transparent);
  }
  .tabemoji {
    width: 22px;
    height: 22px;
    margin: 0 9px 0 3px;
  }
  .tabclose {
    flex: none;
    width: 20px;
    height: 28px;
  }
  .tabclose svg { width: 16px; height: 16px; }
  .newtab {
    flex: none;
    width: 58px;
    height: 48px;
  }
  .newtab svg { width: 18px; height: 18px; }
  .window {
    display: flex;
    flex: none;
    align-self: stretch;
    margin-left: 89px;
  }
  .window button { width: 80px; }
  .window svg { width: 20px; height: 20px; }

  .toolbar {
    display: flex;
    align-items: center;
    height: 80px;
    padding: 0 6px 0 8px;
    background: #fff;
    border-radius: 16px 16px 0 0;
  }
  .navs {
    display: flex;
    margin-right: 13px;
  }
  .navs button { width: 63px; height: 56px; }
  .omnibox {
    display: flex;
    flex: 1;
    align-items: center;
    height: 58px;
    padding: 0 25px 0 9px;
    border-radius: 29px;
    background: #efedee;
  }
  .siteinfo {
    width: 42px;
    height: 42px;
    border-radius: 50%;
    background: #fff;
    margin-right: 14px;
  }
  .url {
    flex: 1;
    font-size: 25px;
    line-height: 34px;
    color: #2e2e2e;
  }
  .extensions {
    display: flex;
    margin-left: 16px;
  }
  .ext {
    position: relative;
    width: 63px;
    height: 56px;
  }
  .badge {
    position: absolute;
    left: 50%;
    top: 28px;
    transform: translateX(-50%);
    min-width: 24px;
    padding: 0 4px;
    border-radius: 6px;
    font: 700 19px/25px Roboto, sans-serif;
    color: #fff;
  }
  .indigo { background: #3f51a9; }
  .teal { background: #24475a; margin-left: 12px; }
  .silver { background: #b4b4b4; color: #111; }
  .slate { background: #666; margin-left: 12px; }
  .rule {
    width: 2px;
    height: 28px;
    margin: 0 18px 0 15px;
    background: #d5dbe3;
  }
  .profile {
    width: 56px;
    height: 56px;
  }
  .more {
    width: 62px;
    height: 62px;
    margin-left: 5px;
    border: 3px solid #1556b5;
    border-radius: 50%;
  }
  .more svg {
    width: 6px;
    height: 26px;
    fill: #333;
  }

  .bookmarks {
    display: flex;
    align-items: center;
    gap: 34px;
    height: 62px;
    padding: 0 22px 8px 23px;
    border-bottom: 2px solid #dcdfe0;
    background: #fff;
    color: #3a3a3a;
    white-space: nowrap;
  }
  .bookmarks a {
    display: flex;
    align-items: center;
    gap: 13px;
  }
  .unlock {
    display: flex;
    align-items: center;
    gap: 2px;
  }
  .push { flex: 1; }
  .bookmarks .all {
    padding-left: 28px;
    border-left: 2px solid #d5dbe3;
  }

  /* document page header */
  .pagehead {
    display: flex;
    align-items: center;
    height: 112px;
    padding-left: 42px;
    border-bottom: 2px solid #dee0e3;
    background: #fff;
  }
  .goback svg { width: 18px; height: 30px; }
  .heading {
    display: flex;
    align-items: center;
    gap: 18px;
    width: 505px;
    margin-left: 45px;
    padding-left: 28px;
    border-left: 1px solid #dee0e3;
    line-height: 38px;
  }
  .heading svg { width: 30px; height: 30px; }
  h1 {
    margin: 0;
    font-size: 25px;
    font-weight: 400;
    color: #1f2329;
  }
  .find {
    display: flex;
    align-items: center;
    gap: 20px;
    width: 945px;
    height: 56px;
    padding: 0 20px;
    border: 2px solid #e3e5e8;
    border-radius: 10px;
  }
  .find svg { width: 28px; height: 28px; }
  .find input {
    flex: 1;
    font-size: 25px;
    line-height: 36px;
  }
  .find input::placeholder {
    color: #8f959e;
    opacity: 1;
  }

  /* relation graph */
  .canvas {
    position: relative;
    display: grid;
    flex: 1;
    background: #f5f6f8;
  }
  .stage,
  .legend {
    grid-area: 1 / 1;
  }
  .stage {
    position: relative;
    place-self: center;
    width: 960px;
    height: 760px;
  }
  .edges {
    width: 100%;
    height: 100%;
  }
  .node {
    position: absolute;
    width: 0;
    height: 0;
  }
  .dot {
    position: absolute;
    left: -28px;
    top: -28px;
    display: grid;
    place-items: center;
    width: 56px;
    height: 56px;
    border-radius: 50%;
    background: #336df4;
  }
  .selected .dot {
    box-shadow:
      0 0 0 17px rgb(51 109 244 / 0.32),
      0 0 0 38px rgb(51 80 220 / 0.04);
  }
  .faded .dot {
    background: #e2e8f7;
  }
  .lines {
    width: 22px;
    height: 24px;
  }
  .label {
    position: absolute;
    top: 29px;
    left: 0;
    display: flex;
    align-items: center;
    gap: 20px;
    padding-left: 8px;
    transform: translateX(-50%);
    font-size: 42px;
    line-height: 60px;
    color: #646a73;
    white-space: nowrap;
  }
  .label.plain {
    width: 430px;
    padding: 0;
    text-align: center;
    white-space: normal;
  }
  .faded .label {
    color: #e5e7ea;
  }
  .faded .emoji {
    opacity: 0.12;
  }
  .emoji {
    width: 42px;
    height: 42px;
  }

  .legend {
    display: flex;
    align-self: end;
    align-items: center;
    gap: 28px;
    padding: 0 0 16px 33px;
    height: 48px;
    color: #51565d;
  }
  .key {
    display: flex;
    align-items: center;
    gap: 9px;
  }
  .tight svg {
    width: 22px;
    height: 24px;
  }
  .help {
    margin-left: -4px;
    color: #1f2329;
  }
  .current:is(i) {
    width: 18px;
    height: 18px;
    margin: 3px;
    border-radius: 50%;
    background: #336df4;
    box-shadow: 0 0 0 4px #c8d4f7;
  }
  .pair {
    display: flex;
    align-items: center;
    gap: 15px;
    margin: 0 0 0 3px;
    background: linear-gradient(currentColor, currentColor) center / 24px 4px no-repeat;
  }
  .cyan { color: #2fb9e8; }
  .amber { color: #f5c518; }
  .pair b {
    width: 22px;
    height: 22px;
    border-radius: 50%;
    background: #336df4;
    font: 700 16px/22px Roboto, sans-serif;
    color: #fff;
    text-align: center;
  }
  .pair .ring {
    box-shadow: 0 0 0 3px #a9bff8;
  }

  /* blurred floating tools */
  .floatbar {
    position: absolute;
    right: 11px;
    top: 104px;
    display: flex;
    flex-direction: column;
    align-items: center;
    gap: 29px;
    width: 64px;
    height: 372px;
    padding-top: 23px;
    border-radius: 20px;
    background: #fafbfb;
  }
  .floatbar svg {
    width: 34px;
    height: 34px;
    fill: none;
    stroke: #c6c6d0;
    stroke-width: 3.200px;
    stroke-linejoin: round;
    filter: blur(1px);
  }
  .floatbar .bold { stroke-width: 5px; }
  .floatbar .grip {
    height: 14px;
    stroke: none;
  }
  .floatbar .dots {
    fill: #c2c2cb;
    stroke: none;
  }
  .minimap {
    position: absolute;
    right: 0;
    top: 558px;
    display: flex;
    flex-direction: column;
    gap: 3px;
    width: 25px;
    padding: 9px 8px;
    border-radius: 4px 0 0 4px;
    background: #444;
  }
  .minimap i {
    height: 23px;
    background: repeating-linear-gradient(#6d6d6d 0 1px, #4a4a4a 1px 3px);
  }
  .minimap .lit {
    height: 4px;
    background: #a28247;
  }

  /* desktop taskbar */
  .taskbar {
    display: flex;
    align-items: center;
    justify-content: space-between;
    height: 84px;
    padding: 0 34px 0 18px;
    border-top: 2px solid #b5bcc0;
    background: linear-gradient(90deg, #d4dbe9 0, #d6dcea 16%, #f0eeee 20%, #efefef 47%, #e9eff9 51%, #e9eff8 76%, #f0f0f0 84%);
  }
  .apps {
    display: flex;
  }
  .app {
    position: relative;
    width: 77px;
    height: 70px;
  }
  .app.current::before,
  .app.alert::before {
    content: '';
    position: absolute;
    inset: 1px 5px;
    border-radius: 9px;
    background: #e9eef7;
    box-shadow: 0 1px 2px rgb(0 0 0 / 0.15);
  }
  .app.alert::before {
    inset: 0 4px;
    background: #fce5e7;
    box-shadow: none;
  }
  .appicon {
    position: relative;
    width: 42px;
    height: 42px;
  }
  .overlay {
    position: absolute;
    right: 9px;
    top: 5px;
    width: 28px;
    height: 28px;
    border: 1px solid #999;
    border-radius: 50%;
  }
  .run {
    position: absolute;
    bottom: 2px;
    left: 50%;
    width: 11px;
    height: 5px;
    border-radius: 3px;
    background: #86898e;
    transform: translateX(-50%);
  }
  .app.current .run {
    width: 28px;
    background: #0f4a74;
  }
  .app.alert .run {
    background: #bb2a2a;
  }
  .tray {
    display: flex;
    align-items: center;
    gap: 34px;
  }
  .t20 { width: 20px; height: 20px; }
  .t24 { width: 26px; height: 28px; }
  .t28 { width: 28px; height: 28px; }
  .wide {
    margin: 0 4px 0 6px;
  }
  .status {
    display: flex;
    gap: 14px;
  }
  .clock {
    flex-direction: column;
    align-items: flex-end;
    margin: 0 -20px 0 -2px;
    font-size: 21px;
    line-height: 28px;
  }
</style>
